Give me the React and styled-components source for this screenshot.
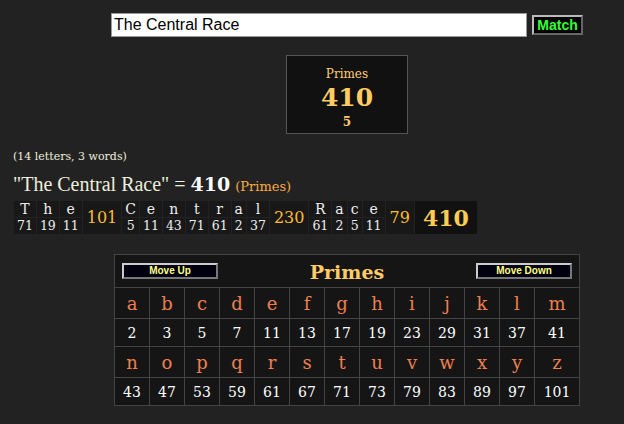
import React from 'react';
import styled, { createGlobalStyle } from 'styled-components';

const GlobalStyle = createGlobalStyle`
  body {
    margin: 0;
    background-color: #222222;
    color: #eeeedd;
    font-family: 'DejaVu Serif', serif;
  }
`;

const Page = styled.div`
  width: 624px;
  height: 424px;
  overflow: hidden;
`;

const Centered = styled.div`
  padding-left: 70px;
  display: flex;
  flex-direction: column;
  align-items: center;
`;

const SearchBar = styled.form`
  display: flex;
  align-items: center;
  gap: 5px;
  margin-top: 13px;
`;

const SearchInput = styled.input`
  width: 416px;
  height: 24px;
  box-sizing: border-box;
  border: 1px solid #999;
  padding: 0 2px;
  font-family: 'Liberation Sans', Arial, sans-serif;
  font-size: 16px;
  color: #000;
  background: #fff;
  outline: none;
`;

const MatchButton = styled.button`
  width: 51px;
  height: 20px;
  padding: 0;
  background: #000;
  border: 2px outset #bbb;
  color: #33ff33;
  font-family: 'Liberation Sans', Arial, sans-serif;
  font-weight: bold;
  font-size: 14px;
  line-height: 16px;
`;

const ResultBox = styled.div`
  width: 122px;
  height: 79px;
  box-sizing: border-box;
  margin-top: 18px;
  background: #111111;
  border: 1px solid #555;
  display: flex;
  flex-direction: column;
  align-items: center;
  padding-top: 10px;
`;

const BoxLabel = styled.div`
  color: #ffcc77;
  font-size: 12px;
  line-height: 16px;
`;

const BoxValue = styled.div`
  color: #ffcc66;
  font-weight: bold;
  font-size: 25px;
  line-height: 32px;
`;

const BoxSub = styled.div`
  color: #ffcc66;
  font-weight: bold;
  font-size: 12px;
  line-height: 16px;
`;

const Left = styled.div`
  padding-left: 13px;
`;

const Counts = styled.div`
  margin-top: 16px;
  font-size: 11px;
  line-height: 14px;
  color: #eeeedd;
`;

const Summary = styled.div`
  margin-top: 9px;
  font-family: 'Liberation Serif', serif;
  font-size: 20px;
  line-height: 22px;
  color: #eeeedd;
`;

const SumValue = styled.b`
  font-family: 'DejaVu Serif', serif;
  font-size: 19px;
  color: #fff;
`;

const SumCipher = styled.span`
  font-family: 'DejaVu Serif', serif;
  font-size: 13px;
  color: #ffaa44;
`;

const Breakdown = styled.table`
  margin-top: 2px;
  border-collapse: separate;
  border-spacing: 1px;
  background: #222;
`;

const LetterCell = styled.td`
  background: #181818;
  text-align: center;
  padding: 0 3px;
  height: 16px;
  font-size: ${p => (p.$num ? '12.5px' : '14px')};
  line-height: 16px;
  color: #eeeeee;
`;

const WordSum = styled.td`
  background: #181818;
  text-align: center;
  padding: 0 4px;
  font-size: 16px;
  color: #ffbb33;
`;

const TotalCell = styled.td`
  background: #111;
  text-align: center;
  padding: 0 8px;
  font-size: 22px;
  font-weight: bold;
  color: #ffcc55;
`;

const Chart = styled.table`
  margin-top: 19px;
  border-collapse: collapse;
  background: #151515;
  border: 1px solid #444;
`;

const ChartHead = styled.td`
  height: 32px;
  padding: 0 7px;
  border: 1px solid #444;
`;

const HeadRow = styled.div`
  display: flex;
  align-items: center;
  justify-content: space-between;
`;

const MoveButton = styled.button`
  width: 96px;
  height: 16px;
  padding: 0;
  background: #000010;
  border: 2px outset #ccc;
  color: #ffff88;
  font-family: 'Liberation Sans', Arial, sans-serif;
  font-weight: bold;
  font-size: 10px;
  line-height: 12px;
`;

const ChartTitle = styled.div`
  color: #ffcc66;
  font-weight: bold;
  font-size: 19px;
  margin-top: 2px;
`;

const Cell = styled.td`
  width: ${p => (p.$wide ? '44px' : '34px')};
  height: ${p => (p.$letter ? '30px' : '27px')};
  padding: 0;
  border: 1px solid #444;
  text-align: center;
  font-size: ${p => (p.$letter ? '18px' : '14px')};
  color: ${p => (p.$letter ? '#ee8050' : '#ffffff')};
`;

const primes = [2, 3, 5, 7, 11, 13, 17, 19, 23, 29, 31, 37, 41, 43, 47, 53, 59, 61, 67, 71, 73, 79, 83, 89, 97, 101];
const alphabet = 'abcdefghijklmnopqrstuvwxyz'.split('');
const valueOf = ch => primes[ch.toLowerCase().charCodeAt(0) - 97];

const phrase = 'The Central Race';
const words = phrase.split(' ');

const App = () => {
  const halves = [alphabet.slice(0, 13), alphabet.slice(13)];

  return (
    <Page>
      <GlobalStyle />
      <Centered>
        <SearchBar onSubmit={e => e.preventDefault()}>
          <SearchInput defaultValue={phrase} />
          <MatchButton>Match</MatchButton>
        </SearchBar>
        <ResultBox>
          <BoxLabel>Primes</BoxLabel>
          <BoxValue>410</BoxValue>
          <BoxSub>5</BoxSub>
        </ResultBox>
      </Centered>

      <Left>
        <Counts>(14 letters, 3 words)</Counts>
        <Summary>
          "The Central Race" = <SumValue>410</SumValue> <SumCipher>(Primes)</SumCipher>
        </Summary>
        <Breakdown>
          <tbody>
            <tr>
              {words.map(w => (
                <React.Fragment key={w}>
                  {w.split('').map((ch, i) => (
                    <LetterCell key={i}>{ch}</LetterCell>
                  ))}
                  <WordSum rowSpan={2}>
                    {w.split('').reduce((s, ch) => s + valueOf(ch), 0)}
                  </WordSum>
                </React.Fragment>
              ))}
              <TotalCell rowSpan={2}>410</TotalCell>
            </tr>
            <tr>
              {words.map(w =>
                w.split('').map((ch, i) => (
                  <LetterCell key={w + i} $num>{valueOf(ch)}</LetterCell>
                ))
              )}
            </tr>
          </tbody>
        </Breakdown>
      </Left>

      <Centered>
        <Chart>
          <tbody>
            <tr>
              <ChartHead colSpan={13}>
                <HeadRow>
                  <MoveButton>Move Up</MoveButton>
                  <ChartTitle>Primes</ChartTitle>
                  <MoveButton>Move Down</MoveButton>
                </HeadRow>
              </ChartHead>
            </tr>
            {halves.map((row, r) => (
              <React.Fragment key={r}>
                <tr>
                  {row.map((ch, i) => (
                    <Cell key={ch} $letter $wide={i === 12}>{ch}</Cell>
                  ))}
                </tr>
                <tr>
                  {row.map((ch, i) => (
                    <Cell key={ch} $wide={i === 12}>{valueOf(ch)}</Cell>
                  ))}
                </tr>
              </React.Fragment>
            ))}
          </tbody>
        </Chart>
      </Centered>
    </Page>
  );
};

export default App;
